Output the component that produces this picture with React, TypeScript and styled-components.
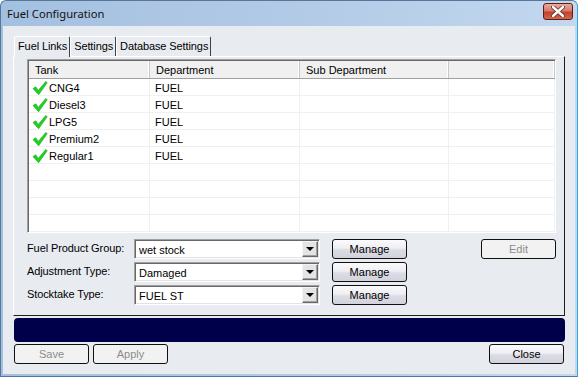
import * as React from 'react';
import styled, { createGlobalStyle } from 'styled-components';

//-----------------------------------------------------------------------------//
// Global
//-----------------------------------------------------------------------------//

const GlobalStyle = createGlobalStyle`
  html, body {
    margin:   0;
    padding:  0;
  }
  body {
    width:       578px;
    height:      377px;
    overflow:    hidden;
    font-family: "Liberation Sans", Arial, sans-serif;
    font-size:   11px;
    color:       #000;
  }
`;

//-----------------------------------------------------------------------------//
// Window frame
//-----------------------------------------------------------------------------//

const Window = styled.div`
  width:          578px;
  height:         377px;
  box-sizing:     border-box;
  display:        flex;
  flex-direction: column;
  border:         1px solid #55779c;
  border-right-color: #3aa6e0;
  border-radius:  6px 6px 0 0;
  background:     linear-gradient(90deg, #a4c0e0 0%, #b3cbe7 55%, #c2d8ef 100%);
`;

const TitleBar = styled.div`
  height:      25px;
  display:     flex;
  align-items: center;
  padding:     0 4px 0 6px;
  font-family: "Noto Sans", "Liberation Sans", sans-serif;
  font-size:   11.2px;
  color:       #111;
`;

const Title = styled.span`
  flex: 1;
`;

const CloseBox = styled.div`
  width:           30px;
  height:          17px;
  box-sizing:      border-box;
  margin-top:      -4px;
  display:         flex;
  align-items:     center;
  justify-content: center;
  border:          1px solid #5e1d16;
  border-radius:   3px;
  background:      linear-gradient(#e9ab9d 0%, #d9796a 45%, #c2412d 55%, #d2674f 100%);
`;

const Client = styled.div`
  flex:           1;
  margin:         0 2px 2px 2px;
  display:        flex;
  flex-direction: column;
  padding:        10px 10px 0 10px;
  background:     #e8ecf1;
`;

//-----------------------------------------------------------------------------//
// Tabs
//-----------------------------------------------------------------------------//

const TabStrip = styled.div`
  display:      flex;
  height:       20px;
  padding-left: 1px;
  position:     relative;
  z-index:      1;
`;

const Tab = styled.div<{ $active?: boolean }>`
  box-sizing:   border-box;
  height:       ${p => p.$active ? '21px' : '20px'};
  padding:      3px 2px 0 3px;
  border-top:   1px solid #fff;
  border-left:  1px solid #fff;
  border-right: 1px solid #404040;
  border-radius: 2px 2px 0 0;
  background:   #e8ecf1;
  white-space:  nowrap;
  letter-spacing: -0.1px;
`;

const TabPanel = styled.div`
  display:        flex;
  flex-direction: column;
  padding:        2px 8px 10px 13px;
  border:         1px solid;
  border-color:   #fff #1e1e1e #1e1e1e #fff;
`;

//-----------------------------------------------------------------------------//
// List view
//-----------------------------------------------------------------------------//

const COLS = '121px 150px 149px 1fr';

const ListView = styled.div`
  border:       1px solid;
  border-color: #a0a0a0 #fff #fff #a0a0a0;
  box-shadow:   inset 1px 1px 0 #696969;
  padding:      1px 0 0 1px;
  background:   #fff;
`;

const HeaderRow = styled.div`
  display:               grid;
  grid-template-columns: ${COLS};
  height:                18px;
  box-sizing:            border-box;
  background:            #f0f0f0;
  border-bottom:         1px solid #a0a0a0;
`;

const HeaderCell = styled.div`
  padding:      3px 0 0 6px;
  border-right: 1px solid #c8c8c8;
  box-shadow:   inset -1px 0 0 #fff;
`;

const Row = styled.div`
  display:               grid;
  grid-template-columns: ${COLS};
  height:                17px;
  box-sizing:            border-box;
  border-bottom:         1px solid #f0f0f0;
`;

const Cell = styled.div<{ $icon?: boolean }>`
  display:      flex;
  align-items:  center;
  gap:          1px;
  padding-top:  1px;
  padding-left: ${p => p.$icon ? '3px' : '5px'};
  border-right: 1px solid #f0f0f0;
  white-space:  nowrap;
`;

const Check = () => (
  <svg width="16" height="16" viewBox="0 0 16 16">
    <path d="M1 8.6 L3.8 6.8 L6.2 10.4 L13.8 1.4 L15.2 2.8 L6.6 14.8 Z"
      fill="#1fd21f" stroke="#16a616" strokeWidth="0.6" strokeLinejoin="round"/>
  </svg>
);

//-----------------------------------------------------------------------------//
// Form
//-----------------------------------------------------------------------------//

const Form = styled.div`
  display:               grid;
  grid-template-columns: 95px 186px 75px 1fr;
  grid-auto-rows:        20px;
  column-gap:            12px;
  row-gap:               3px;
  margin-top:            6px;
  align-items:           center;
`;

const Label = styled.div`
  align-self:  start;
  padding-top: 3px;
  white-space: nowrap;
  letter-spacing: -0.1px;
`;

const Combo = styled.div`
  height:       20px;
  box-sizing:   border-box;
  display:      flex;
  border:       1px solid;
  border-color: #a0a0a0 #fff #fff #a0a0a0;
  box-shadow:   inset 1px 1px 0 #696969, inset -1px -1px 0 #e3e3e3;
  background:   #fff;
  padding:      1px;
`;

const ComboText = styled.div`
  flex:        1;
  padding:     3px 0 0 3px;
  white-space: nowrap;
`;

const ComboButton = styled.div`
  width:           16px;
  box-sizing:      border-box;
  display:         flex;
  align-items:     center;
  justify-content: center;
  background:      #e4e4e4;
  border:          1px solid;
  border-color:    #f4f4f4 #696969 #696969 #f4f4f4;
  box-shadow:      inset -1px -1px 0 #a0a0a0;
`;

const Arrow = styled.div`
  width:         0;
  height:        0;
  border-left:   4px solid transparent;
  border-right:  4px solid transparent;
  border-top:    4px solid #000;
`;

const Button = styled.div<{ $disabled?: boolean }>`
  width:           75px;
  height:          20px;
  box-sizing:      border-box;
  display:         flex;
  align-items:     center;
  justify-content: center;
  border:          1px solid #101010;
  border-radius:   3px;
  color:           ${p => p.$disabled ? '#8c8c8c' : '#000'};
  background:      ${p => p.$disabled
    ? '#f2f2f2'
    : 'linear-gradient(#fbfbfd 0%, #eeeef3 45%, #dcdce5 55%, #d2d2dc 100%)'};
`;

const EditButton = styled(Button)`
  justify-self: end;
`;

//-----------------------------------------------------------------------------//
// Footer
//-----------------------------------------------------------------------------//

const Progress = styled.div`
  height:        24px;
  margin:        2px 0 0 1px;
  border-radius: 4px;
  background:    #00004a;
`;

const ButtonBar = styled.div`
  display:  flex;
  gap:      4px;
  margin:   2px 1px 0 1px;
`;

const Spacer = styled.div`
  flex: 1;
`;

//-----------------------------------------------------------------------------//
// Data
//-----------------------------------------------------------------------------//

const tanks = ['CNG4', 'Diesel3', 'LPG5', 'Premium2', 'Regular1'];

const fields = [
  { label: 'Fuel Product Group:', value: 'wet stock' },
  { label: 'Adjustment Type:',    value: 'Damaged'   },
  { label: 'Stocktake Type:',     value: 'FUEL ST'   },
];

//-----------------------------------------------------------------------------//
// Component
//-----------------------------------------------------------------------------//

export default function App() {
  return (
    <>
      <GlobalStyle />
      <Window>
        <TitleBar>
          <Title>Fuel Configuration</Title>
          <CloseBox>
            <svg width="14" height="11" viewBox="0 0 14 11">
              <path d="M2 1 L12 10 M12 1 L2 10"
                stroke="#5a2a24" strokeWidth="4" strokeLinecap="round" fill="none"/>
              <path d="M2 1 L12 10 M12 1 L2 10"
                stroke="#fff" strokeWidth="2.4" strokeLinecap="round" fill="none"/>
            </svg>
          </CloseBox>
        </TitleBar>

        <Client>
          <TabStrip>
            <Tab $active>Fuel Links</Tab>
            <Tab>Settings</Tab>
            <Tab>Database Settings</Tab>
          </TabStrip>

          <TabPanel>
            <ListView>
              <HeaderRow>
                <HeaderCell>Tank</HeaderCell>
                <HeaderCell>Department</HeaderCell>
                <HeaderCell>Sub Department</HeaderCell>
                <HeaderCell />
              </HeaderRow>
              {tanks.map(t => (
                <Row key={t}>
                  <Cell $icon><Check />{t}</Cell>
                  <Cell>FUEL</Cell>
                  <Cell />
                  <Cell />
                </Row>
              ))}
              {[0, 1, 2, 3].map(i => (
                <Row key={'e' + i}>
                  <Cell /><Cell /><Cell /><Cell />
                </Row>
              ))}
            </ListView>

            <Form>
              {fields.map((f, i) => (
                <React.Fragment key={f.label}>
                  <Label>{f.label}</Label>
                  <Combo>
                    <ComboText>{f.value}</ComboText>
                    <ComboButton><Arrow /></ComboButton>
                  </Combo>
                  <Button>Manage</Button>
                  {i === 0 ? <EditButton $disabled>Edit</EditButton> : <div />}
                </React.Fragment>
              ))}
            </Form>
          </TabPanel>

          <Progress />

          <ButtonBar>
            <Button $disabled>Save</Button>
            <Button $disabled>Apply</Button>
            <Spacer />
            <Button>Close</Button>
          </ButtonBar>
        </Client>
      </Window>
    </>
  );
}
